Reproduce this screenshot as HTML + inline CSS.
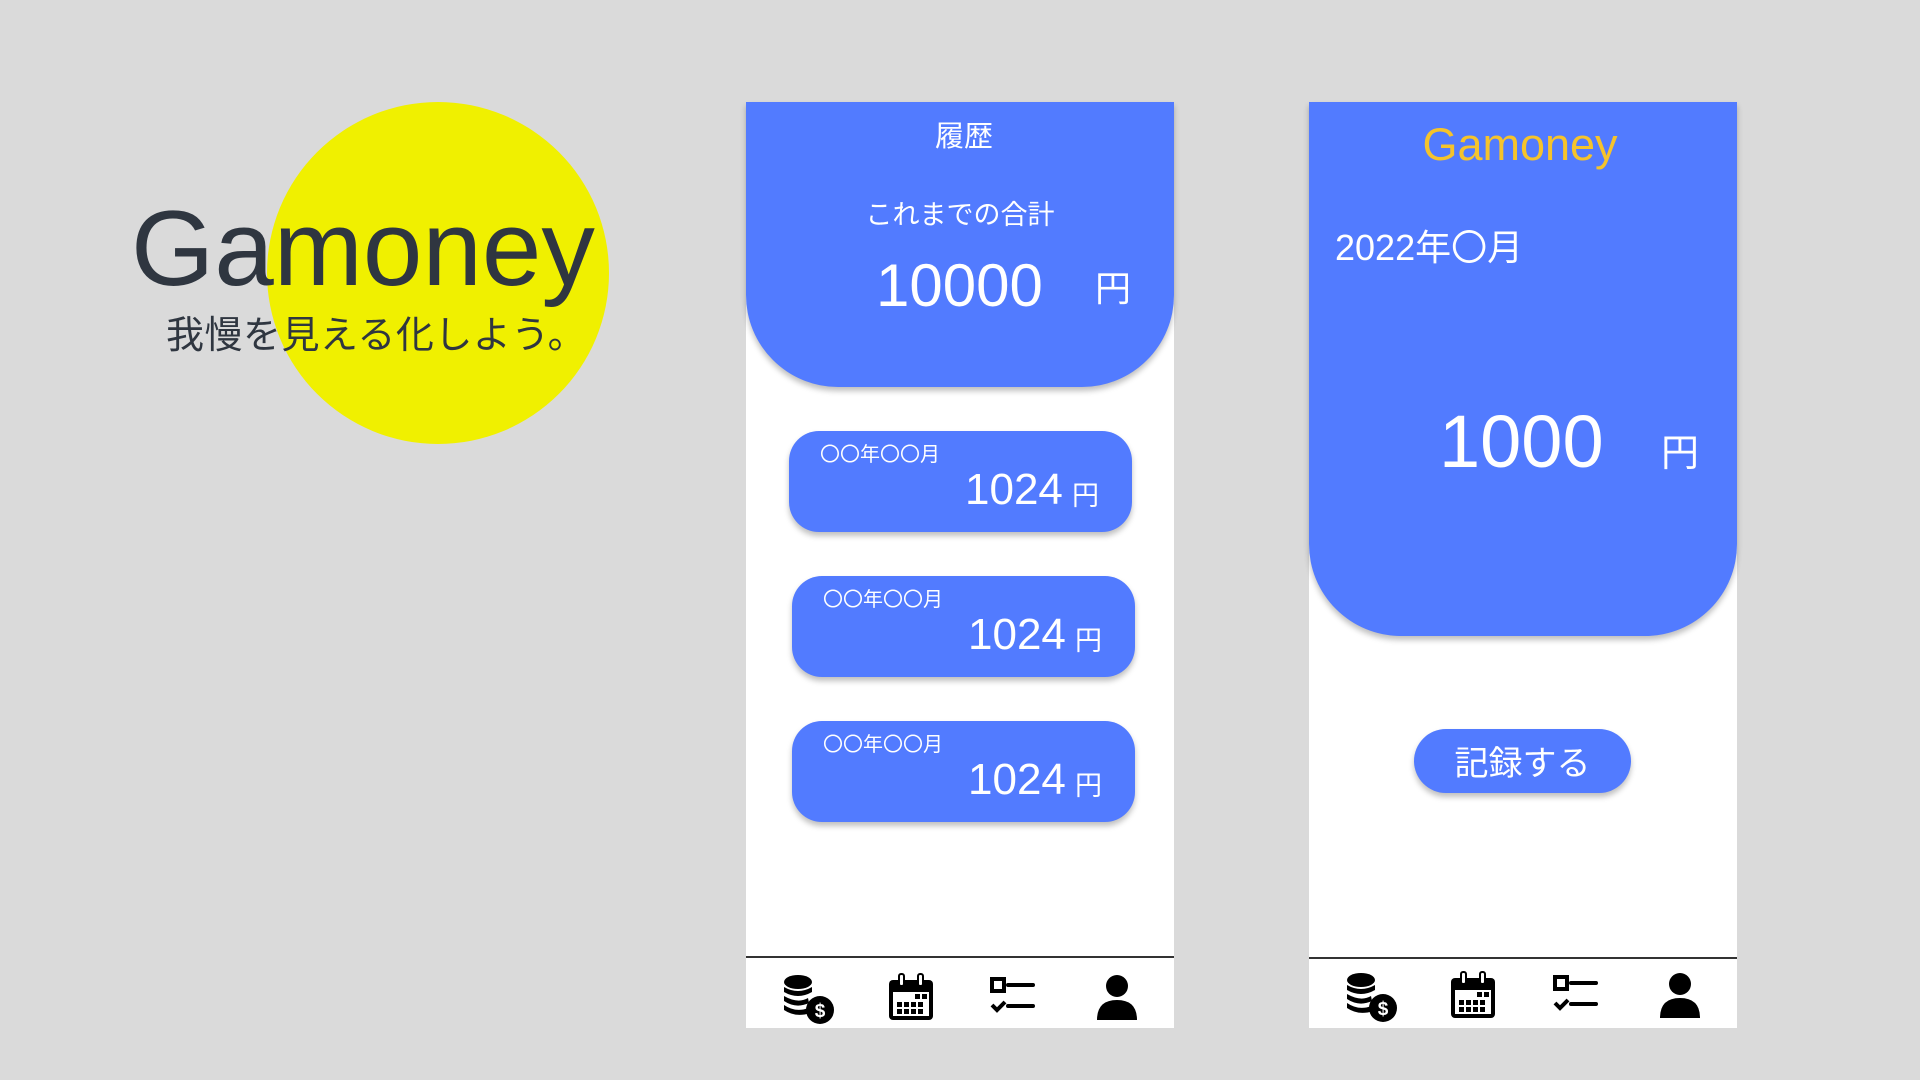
<!DOCTYPE html>
<html><head><meta charset="utf-8"><style>
*{margin:0;padding:0;box-sizing:border-box}
body{width:1920px;height:1080px;background:#dadada;position:relative;overflow:hidden;font-family:"Liberation Sans","Noto Sans CJK JP",sans-serif}
.a{position:absolute;white-space:nowrap;line-height:1}
.w{color:#fff}
.phone{position:absolute;top:102px;width:428px;height:926px;background:#fff}
.blue{position:absolute;left:0;top:0;width:428px;background:#527bff;border-radius:0 0 92px 92px;box-shadow:0 4px 6px rgba(0,0,0,.25)}
.card{position:absolute;width:343px;height:101px;background:#527bff;border-radius:30px;box-shadow:0 4px 6px rgba(0,0,0,.25)}
.line{position:absolute;left:0;width:428px;height:2px;background:#333}
.ic{position:absolute;width:52px;height:52px}
</style></head><body>
<div class="a" style="left:267px;top:102px;width:342px;height:342px;border-radius:50%;background:#f0f000"></div>
<div class="a" style="left:131px;top:195px;font-size:107px;color:#2f3640">Gamoney</div>
<div class="a" style="left:166px;top:317px;font-size:38px;letter-spacing:0.5px;color:#2f3640">我慢を見える化しよう。</div>

<div class="phone" style="left:746px">
 <div class="blue" style="height:285px"></div>
 <div class="a w" style="left:4px;width:428px;text-align:center;top:21px;font-size:29px">履歴</div>
 <div class="a w" style="left:0;width:428px;text-align:center;top:100px;font-size:27px">これまでの合計</div>
 <div class="a w" style="left:130px;top:154px;font-size:60px">10000</div>
 <div class="a w" style="left:349px;top:169px;font-size:36px">円</div>
 <div class="card" style="left:43px;top:329px"><div class="a w" style="left:31px;top:14px;font-size:20px">〇〇年〇〇月</div><div class="a w" style="left:176px;top:37px;font-size:44px">1024</div><div class="a w" style="left:283px;top:52px;font-size:27px">円</div></div>
 <div class="card" style="left:46px;top:474px"><div class="a w" style="left:31px;top:14px;font-size:20px">〇〇年〇〇月</div><div class="a w" style="left:176px;top:37px;font-size:44px">1024</div><div class="a w" style="left:283px;top:52px;font-size:27px">円</div></div>
 <div class="card" style="left:46px;top:619px"><div class="a w" style="left:31px;top:14px;font-size:20px">〇〇年〇〇月</div><div class="a w" style="left:176px;top:37px;font-size:44px">1024</div><div class="a w" style="left:283px;top:52px;font-size:27px">円</div></div>
 <div class="line" style="top:854px"></div>
</div>

<div class="phone" style="left:1309px">
 <div class="blue" style="height:534px"></div>
 <div class="a" style="left:-3px;width:428px;text-align:center;top:20px;font-size:45px;color:#f5c32c">Gamoney</div>
 <div class="a w" style="left:26px;top:128px;font-size:36px">2022年〇月</div>
 <div class="a w" style="left:130px;top:303px;font-size:74px">1000</div>
 <div class="a w" style="left:352px;top:333px;font-size:38px">円</div>
 <div class="a" style="left:105px;top:627px;width:217px;height:64px;border-radius:32px;background:#527bff;box-shadow:0 4px 6px rgba(0,0,0,.25)"></div>
 <div class="a w" style="left:105px;top:645px;width:217px;text-align:center;font-size:34px">記録する</div>
 <div class="line" style="top:855px"></div>
</div>

<svg width="0" height="0" style="position:absolute"><defs>
<g id="coin"><ellipse cx="16" cy="9" rx="14" ry="7"/><path d="M2 14q14 8 28 0v5q-14 8-28 0z M2 23q14 8 24 2l1 5q-13 6-25-2z M2 32q12 8 24 3l2 5q-14 5-26-3z"/><circle cx="38" cy="37" r="14"/><text x="38" y="44" font-size="19" font-weight="bold" fill="#fff" text-anchor="middle" font-family="Liberation Sans">$</text></g>
<g id="cal"><rect x="4" y="8" width="44" height="40" rx="4"/><rect x="8" y="20" width="36" height="24" fill="#fff"/><rect x="14" y="2" width="5" height="12" rx="2" fill="#fff" stroke="#000" stroke-width="2"/><rect x="33" y="2" width="5" height="12" rx="2" fill="#fff" stroke="#000" stroke-width="2"/><path d="M30 22h5v5h-5zM37 22h5v5h-5zM12 30h5v5h-5zM19 30h5v5h-5zM26 30h5v5h-5zM33 30h5v5h-5zM12 37h5v5h-5zM19 37h5v5h-5zM26 37h5v5h-5zM33 37h5v5h-5z"/></g>
<g id="list"><rect x="4" y="5" width="12" height="12" fill="none" stroke="#000" stroke-width="4"/><path d="M20 11h25M20 32h25" stroke="#000" stroke-width="4" stroke-linecap="round"/><path d="M4 31l5 5l8-8" fill="none" stroke="#000" stroke-width="4"/></g>
<g id="user"><circle cx="26" cy="14" r="11"/><path d="M6 48q0-20 20-20q20 0 20 20z"/></g>
</defs></svg>
<svg class="ic" style="left:782px;top:973px" viewBox="0 0 52 52"><use href="#coin"/></svg>
<svg class="ic" style="left:885px;top:972px" viewBox="0 0 52 52"><use href="#cal"/></svg>
<svg class="ic" style="left:988px;top:974px" viewBox="0 0 52 52"><use href="#list"/></svg>
<svg class="ic" style="left:1091px;top:972px" viewBox="0 0 52 52"><use href="#user"/></svg>
<svg class="ic" style="left:1345px;top:971px" viewBox="0 0 52 52"><use href="#coin"/></svg>
<svg class="ic" style="left:1447px;top:970px" viewBox="0 0 52 52"><use href="#cal"/></svg>
<svg class="ic" style="left:1551px;top:972px" viewBox="0 0 52 52"><use href="#list"/></svg>
<svg class="ic" style="left:1654px;top:970px" viewBox="0 0 52 52"><use href="#user"/></svg>
</body></html>
